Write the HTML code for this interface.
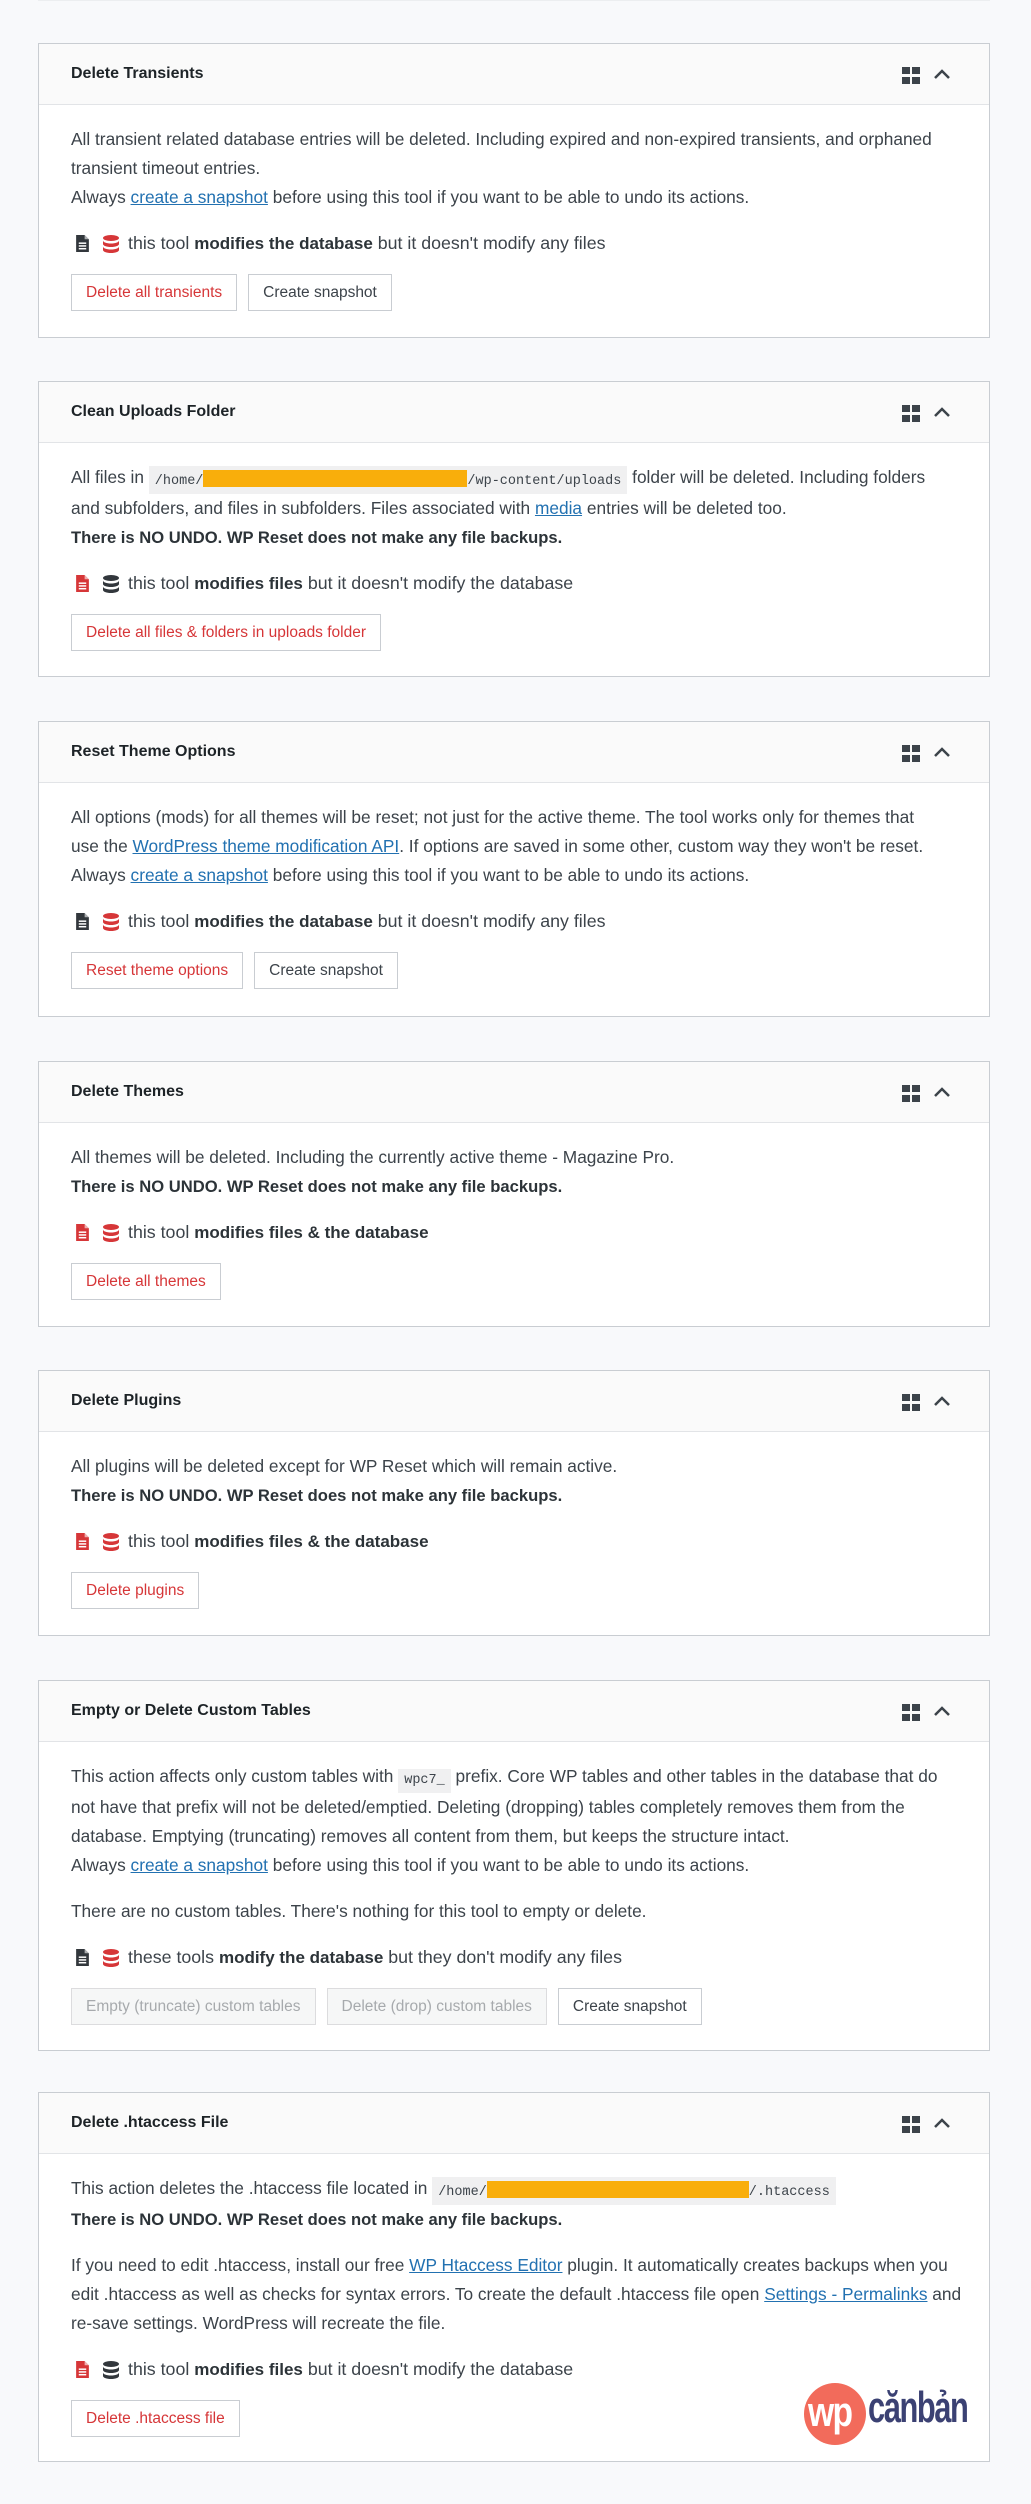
<!DOCTYPE html>
<html><head><meta charset="utf-8">
<style>
*{box-sizing:border-box;margin:0;padding:0}
html,body{width:1031px;height:2504px;background:#f8f9fb;font-family:"Liberation Sans",sans-serif;color:#3c434a;overflow:hidden}
body{position:relative}
.topline{position:absolute;left:38px;top:0;width:952px;height:1px;background:#eceef0}
.card{position:absolute;left:38px;width:952px;background:#fff;border:1px solid #c9cdd2}
.hd{height:61px;background:#fafafa;border-bottom:1px solid #e2e4e7;position:relative}
.hd h2{position:absolute;left:32px;top:0;line-height:60px;font-size:16px;font-weight:600;color:#1d2327}
.grid{position:absolute;left:863px;top:23px;width:18px;height:17px}
.grid i{position:absolute;width:8px;height:7px;background:#3c434a}
.chev{position:absolute;left:894px;top:24px}
.ct{padding:20px 32px 26px}
p{font-size:17.3px;line-height:29px;white-space:nowrap;margin-bottom:17px}
p b{font-size:16.6px}
a{color:#2271b1;text-decoration:underline}
code{font-family:"Liberation Mono",monospace;font-size:13.5px;line-height:16px;background:#f0f0f1;padding:4px 6px;color:#3c434a;display:inline-block;vertical-align:-1px}
.or{display:inline-block;background:#f9ae0b;height:17px;vertical-align:-3px}
.meta{font-size:17.8px;line-height:29px;margin-bottom:16px;white-space:nowrap;display:flex;align-items:center;padding-left:5px}
.meta b{font-size:17px}
.meta svg:first-child{margin-right:14px}
.meta svg+svg{margin-right:9px}
b{font-weight:700;color:#2c3338}
.btn{display:inline-block;height:37px;line-height:35px;border:1px solid #c9cdd2;padding:0 14px;font-size:15.5px;color:#3c434a;background:#fff;margin-right:11px;vertical-align:top}
.red{color:#d63638}
.dis{color:#a7aaad;background:#f6f7f7;border-color:#dcdcde}
</style></head><body>
<div class="topline"></div>

<svg width="0" height="0" style="position:absolute">
<defs>
<symbol id="file" viewBox="0 0 12 16"><path d="M0 0h8l4 4v12H0z"/><path d="M8 0v4h4" fill="#fff" opacity=".6"/><rect x="2.5" y="7" width="7" height="1.4" fill="#fff"/><rect x="2.5" y="9.6" width="7" height="1.4" fill="#fff"/><rect x="2.5" y="12.2" width="7" height="1.4" fill="#fff"/></symbol>
<symbol id="db" viewBox="0 0 16 18"><ellipse cx="8" cy="3" rx="8" ry="3"/><path d="M0 5.5c0 1.7 3.6 3 8 3s8-1.3 8-3V9c0 1.7-3.6 3-8 3S0 10.7 0 9z"/><path d="M0 11.5c0 1.7 3.6 3 8 3s8-1.3 8-3V15c0 1.7-3.6 3-8 3s-8-1.3-8-3z"/></symbol>
</defs></svg>

<div class="card" style="top:43px;height:295px">
 <div class="hd"><h2>Delete Transients</h2><div class="grid"><i style="left:0;top:0"></i><i style="left:10px;top:0"></i><i style="left:0;top:10px"></i><i style="left:10px;top:10px"></i></div><svg class="chev" width="18" height="12" viewBox="0 0 18 12"><path d="M2 10L9 3l7 7" fill="none" stroke="#3c434a" stroke-width="2.5"/></svg></div>
 <div class="ct">
  <p>All transient related database entries will be deleted. Including expired and non-expired transients, and orphaned<br>transient timeout entries.<br>Always <a>create a snapshot</a> before using this tool if you want to be able to undo its actions.</p>
  <div class="meta"><svg width="13" height="17" fill="#32373c"><use href="#file"/></svg><svg width="16" height="18" fill="#d63638"><use href="#db"/></svg>this tool&nbsp;<b>modifies the database</b>&nbsp;but it doesn't modify any files</div>
  <span class="btn red">Delete all transients</span><span class="btn">Create snapshot</span>
 </div>
</div>

<div class="card" style="top:381px;height:296px">
 <div class="hd"><h2>Clean Uploads Folder</h2><div class="grid"><i style="left:0;top:0"></i><i style="left:10px;top:0"></i><i style="left:0;top:10px"></i><i style="left:10px;top:10px"></i></div><svg class="chev" width="18" height="12" viewBox="0 0 18 12"><path d="M2 10L9 3l7 7" fill="none" stroke="#3c434a" stroke-width="2.5"/></svg></div>
 <div class="ct">
  <p>All files in <code>/home/<span class="or" style="width:264px"></span>/wp-content/uploads</code> folder will be deleted. Including folders<br>and subfolders, and files in subfolders. Files associated with <a>media</a> entries will be deleted too.<br><b>There is NO UNDO. WP Reset does not make any file backups.</b></p>
  <div class="meta"><svg width="13" height="17" fill="#d63638"><use href="#file"/></svg><svg width="16" height="18" fill="#32373c"><use href="#db"/></svg>this tool&nbsp;<b>modifies files</b>&nbsp;but it doesn't modify the database</div>
  <span class="btn red">Delete all files &amp; folders in uploads folder</span>
 </div>
</div>

<div class="card" style="top:721px;height:296px">
 <div class="hd"><h2>Reset Theme Options</h2><div class="grid"><i style="left:0;top:0"></i><i style="left:10px;top:0"></i><i style="left:0;top:10px"></i><i style="left:10px;top:10px"></i></div><svg class="chev" width="18" height="12" viewBox="0 0 18 12"><path d="M2 10L9 3l7 7" fill="none" stroke="#3c434a" stroke-width="2.5"/></svg></div>
 <div class="ct">
  <p>All options (mods) for all themes will be reset; not just for the active theme. The tool works only for themes that<br>use the <a>WordPress theme modification API</a>. If options are saved in some other, custom way they won't be reset.<br>Always <a>create a snapshot</a> before using this tool if you want to be able to undo its actions.</p>
  <div class="meta"><svg width="13" height="17" fill="#32373c"><use href="#file"/></svg><svg width="16" height="18" fill="#d63638"><use href="#db"/></svg>this tool&nbsp;<b>modifies the database</b>&nbsp;but it doesn't modify any files</div>
  <span class="btn red">Reset theme options</span><span class="btn">Create snapshot</span>
 </div>
</div>

<div class="card" style="top:1061px;height:266px">
 <div class="hd"><h2>Delete Themes</h2><div class="grid"><i style="left:0;top:0"></i><i style="left:10px;top:0"></i><i style="left:0;top:10px"></i><i style="left:10px;top:10px"></i></div><svg class="chev" width="18" height="12" viewBox="0 0 18 12"><path d="M2 10L9 3l7 7" fill="none" stroke="#3c434a" stroke-width="2.5"/></svg></div>
 <div class="ct">
  <p>All themes will be deleted. Including the currently active theme - Magazine Pro.<br><b>There is NO UNDO. WP Reset does not make any file backups.</b></p>
  <div class="meta"><svg width="13" height="17" fill="#d63638"><use href="#file"/></svg><svg width="16" height="18" fill="#d63638"><use href="#db"/></svg>this tool&nbsp;<b>modifies files &amp; the database</b></div>
  <span class="btn red">Delete all themes</span>
 </div>
</div>

<div class="card" style="top:1370px;height:266px">
 <div class="hd"><h2>Delete Plugins</h2><div class="grid"><i style="left:0;top:0"></i><i style="left:10px;top:0"></i><i style="left:0;top:10px"></i><i style="left:10px;top:10px"></i></div><svg class="chev" width="18" height="12" viewBox="0 0 18 12"><path d="M2 10L9 3l7 7" fill="none" stroke="#3c434a" stroke-width="2.5"/></svg></div>
 <div class="ct">
  <p>All plugins will be deleted except for WP Reset which will remain active.<br><b>There is NO UNDO. WP Reset does not make any file backups.</b></p>
  <div class="meta"><svg width="13" height="17" fill="#d63638"><use href="#file"/></svg><svg width="16" height="18" fill="#d63638"><use href="#db"/></svg>this tool&nbsp;<b>modifies files &amp; the database</b></div>
  <span class="btn red">Delete plugins</span>
 </div>
</div>

<div class="card" style="top:1680px;height:371px">
 <div class="hd"><h2>Empty or Delete Custom Tables</h2><div class="grid"><i style="left:0;top:0"></i><i style="left:10px;top:0"></i><i style="left:0;top:10px"></i><i style="left:10px;top:10px"></i></div><svg class="chev" width="18" height="12" viewBox="0 0 18 12"><path d="M2 10L9 3l7 7" fill="none" stroke="#3c434a" stroke-width="2.5"/></svg></div>
 <div class="ct">
  <p>This action affects only custom tables with <code>wpc7_</code> prefix. Core WP tables and other tables in the database that do<br>not have that prefix will not be deleted/emptied. Deleting (dropping) tables completely removes them from the<br>database. Emptying (truncating) removes all content from them, but keeps the structure intact.<br>Always <a>create a snapshot</a> before using this tool if you want to be able to undo its actions.</p>
  <p>There are no custom tables. There's nothing for this tool to empty or delete.</p>
  <div class="meta"><svg width="13" height="17" fill="#32373c"><use href="#file"/></svg><svg width="16" height="18" fill="#d63638"><use href="#db"/></svg>these tools&nbsp;<b>modify the database</b>&nbsp;but they don't modify any files</div>
  <span class="btn dis">Empty (truncate) custom tables</span><span class="btn dis">Delete (drop) custom tables</span><span class="btn">Create snapshot</span>
 </div>
</div>

<div class="card" style="top:2092px;height:370px">
 <div class="hd"><h2>Delete .htaccess File</h2><div class="grid"><i style="left:0;top:0"></i><i style="left:10px;top:0"></i><i style="left:0;top:10px"></i><i style="left:10px;top:10px"></i></div><svg class="chev" width="18" height="12" viewBox="0 0 18 12"><path d="M2 10L9 3l7 7" fill="none" stroke="#3c434a" stroke-width="2.5"/></svg></div>
 <div class="ct">
  <p>This action deletes the .htaccess file located in <code>/home/<span class="or" style="width:262px"></span>/.htaccess</code><br><b>There is NO UNDO. WP Reset does not make any file backups.</b></p>
  <p>If you need to edit .htaccess, install our free <a>WP Htaccess Editor</a> plugin. It automatically creates backups when you<br>edit .htaccess as well as checks for syntax errors. To create the default .htaccess file open <a>Settings - Permalinks</a> and<br>re-save settings. WordPress will recreate the file.</p>
  <div class="meta"><svg width="13" height="17" fill="#d63638"><use href="#file"/></svg><svg width="16" height="18" fill="#32373c"><use href="#db"/></svg>this tool&nbsp;<b>modifies files</b>&nbsp;but it doesn't modify the database</div>
  <span class="btn red">Delete .htaccess file</span>
 </div>
</div>

<div style="position:absolute;left:804px;top:2383px;width:62px;height:62px;border-radius:50%;background:#f26b5b"></div>
<div style="position:absolute;left:808px;top:2382px;font-size:42px;font-weight:700;color:#fff;letter-spacing:-2px;line-height:60px;transform:scaleX(.8);transform-origin:left">wp</div>
<div style="position:absolute;left:868px;top:2378px;font-size:44px;font-weight:700;color:#3b4173;letter-spacing:-2px;line-height:60px;transform:scaleX(.7);transform-origin:left">cănbản</div>
</body></html>
